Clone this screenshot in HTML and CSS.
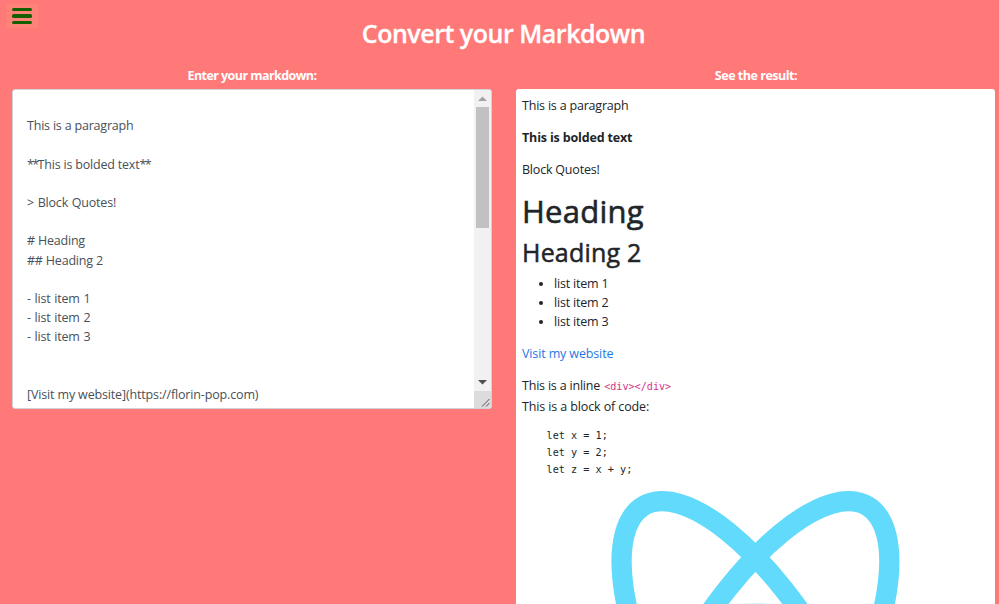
FILE: index.html
```html
<!DOCTYPE html>
<html lang="en">
<head>
<meta charset="utf-8">
<title>Convert your Markdown</title>
<link rel="stylesheet" href="styles.css">
</head>
<body>
<button class="menu" aria-label="Menu"><span class="bar"></span><span class="bar"></span><span class="bar"></span></button>
<h1 class="title"><span>Convert your Markdown</span></h1>
<main class="columns">
  <section class="col">
    <h2 class="label label-in"><span>Enter your markdown:</span></h2>
    <div class="editor">
      <div class="source">
        <div class="row">&nbsp;</div>
        <div class="row">This is a paragraph</div>
        <div class="row">&nbsp;</div>
        <div class="row"><span class="stars">**</span>This is bolded text<span class="stars">**</span></div>
        <div class="row">&nbsp;</div>
        <div class="row marked">&gt; Block Quotes!</div>
        <div class="row">&nbsp;</div>
        <div class="row"># Heading</div>
        <div class="row">## Heading 2</div>
        <div class="row">&nbsp;</div>
        <div class="row marked">- list item 1</div>
        <div class="row marked">- list item 2</div>
        <div class="row marked">- list item 3</div>
        <div class="row">&nbsp;</div>
        <div class="row">&nbsp;</div>
        <div class="row link">[Visit my website](https://florin-pop.com)</div>
      </div>
      <div class="scroll">
        <svg class="arrow" viewBox="0 0 17 17"><path d="M4 11h9L8.500 6.500z" fill="#a3a3a3"/></svg>
        <div class="track"><div class="thumb"></div></div>
        <svg class="arrow" viewBox="0 0 17 17"><path d="M4 6h9L8.500 10.500z" fill="#505050"/></svg>
        <svg class="grip" viewBox="0 0 17 17"><path d="M8 15.500L15.500 8M12 15.500L15.500 12" stroke="#555" fill="none"/></svg>
      </div>
    </div>
  </section>
  <section class="col">
    <h2 class="label label-out"><span>See the result:</span></h2>
    <article class="preview">
      <p>This is a paragraph</p>
      <p><strong>This is bolded text</strong></p>
      <p>Block Quotes!</p>
      <h1>Heading</h1>
      <h2>Heading 2</h2>
      <ul><li>list item 1</li><li>list item 2</li><li>list item 3</li></ul>
      <p><a>Visit my website</a></p>
      <p class="inline">This is a inline <code>&lt;div&gt;&lt;/div&gt;</code></p>
      <p class="block">This is a block of code:</p>
      <pre>let x = 1;
let y = 2;
let z = x + y;</pre>
      <svg class="logo" viewBox="-11.500 -10.255 23 20.510"><g fill="none" stroke="#61dafb"><ellipse rx="11" ry="4.200"/><ellipse rx="11" ry="4.200" transform="rotate(60)"/><ellipse rx="11" ry="4.200" transform="rotate(120)"/></g><circle r="2.050" fill="#61dafb"/></svg>
    </article>
  </section>
</main>
</body>
</html>
```
FILE: styles.css
```css
* { box-sizing: border-box; }
html { height: 604px; overflow: hidden; }
body {
  margin: 0;
  height: 604px;
  overflow: hidden;
  background: #ff7979;
  color: #212529;
  font: 12.5px/19.2px "Open Sans", "Noto Sans", sans-serif;
  letter-spacing: -0.2px;
}
.menu {
  position: absolute;
  left: 6px;
  top: 4px;
  width: 32px;
  height: 24px;
  padding: 4px 6px;
  border: 0;
  background: #ff8279;
  display: flex;
  flex-direction: column;
  justify-content: space-between;
}
.bar { width: 20px; height: 3px; border-radius: 1.5px; background: #146000; }
.bar:nth-child(2) { height: 4px; }
.title {
  margin: 0;
  padding: 16px 0 0 8px;
  height: 66px;
  color: #fff;
  font-size: 25px;
  font-weight: 600;
  line-height: 34px;
  letter-spacing: -0.48px;
  text-align: center;
  -webkit-text-stroke: 0.3px currentColor;
}
.columns { display: grid; grid-template-columns: 480px 480px; column-gap: 24px; padding-left: 12px; }
.label {
  margin: 0;
  height: 23px;
  color: #fff;
  font-size: 12.5px;
  font-weight: 700;
  line-height: 19px;
  letter-spacing: -0.57px;
  text-align: center;
}
.label-out { letter-spacing: -0.48px; }
.editor {
  display: flex;
  height: 320px;
  border: 1px solid #ced4da;
  border-radius: 3px;
  background: #fff;
  overflow: hidden;
}
.source { flex: 1; padding: 7px 14px 0; color: #495057; }
.row { height: 19.2px; white-space: nowrap; }
.marked { word-spacing: 0.7px; }
.link { letter-spacing: -0.15px; }
.stars { letter-spacing: -1.6px; }
.scroll { width: 17px; display: flex; flex-direction: column; background: #f1f1f1; }
.arrow { width: 17px; height: 17px; display: block; }
.track { flex: 1; padding: 0 2px; }
.thumb { height: 121px; background: #c1c1c1; }
.grip { width: 17px; height: 17px; background: #dcdcdc; display: block; }
.preview {
  height: 515px;
  margin-right: 1px;
  padding: 7px 6px 0;
  border-radius: 3px 3px 0 0;
  background: #fff;
  overflow: hidden;
}
.preview p { margin: 0 0 12.8px; }
.preview strong { letter-spacing: -0.16px; }
.preview h1 { margin: 0 0 6.4px; font-size: 31px; font-weight: 500; line-height: 38.4px; letter-spacing: 0.25px; -webkit-text-stroke: 0.6px currentColor; }
.preview h2 { margin: 0 0 6.4px; font-size: 25px; font-weight: 500; line-height: 30.7px; letter-spacing: 0.2px; -webkit-text-stroke: 0.5px currentColor; }
.preview ul { margin: 0 0 12.8px; padding-left: 32px; }
.preview a { color: #1f78e5; letter-spacing: -0.13px; }
.preview code { margin-left: 1px; color: #d63384; font: 10.150px/12px "DejaVu Sans Mono", monospace; letter-spacing: 0; }
.preview .inline { margin-bottom: 1.5px; }
.preview .block { margin-bottom: 10.5px; letter-spacing: -0.12px; }
.preview pre { margin: 0 0 13px; padding-left: 24.5px; font: 10.200px/17px "DejaVu Sans Mono", monospace; letter-spacing: 0; }
.logo { display: block; width: 466.9px; height: 416.4px; }
```
